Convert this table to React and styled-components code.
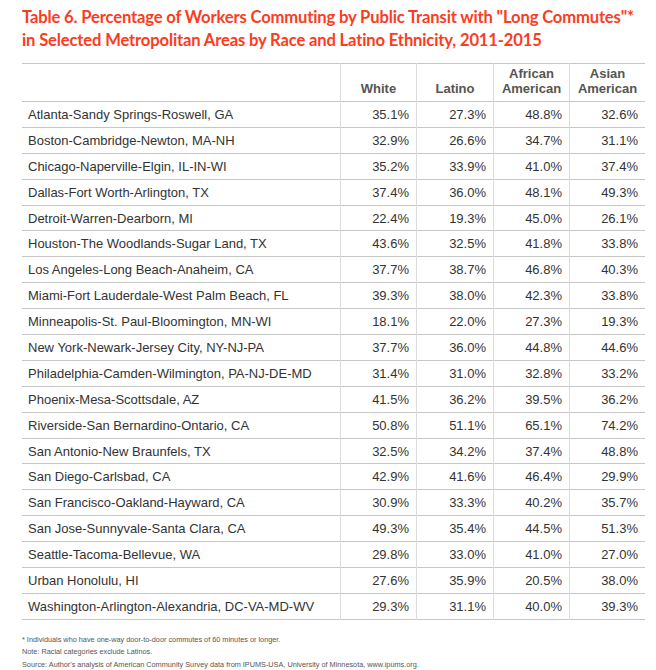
import React from "react";
import styled, { createGlobalStyle } from "styled-components";

const Global = createGlobalStyle`
  html, body { margin: 0; padding: 0; background: #fff; }
  body { font-family: "Liberation Sans", Arial, sans-serif; }
`;

const Page = styled.div`
  padding: 6px 0 0 22px;
  width: 599px;
`;

const Title = styled.h1`
  margin: 0;
  font-family: "Lato", "Open Sans", sans-serif;
  font-weight: 700;
  font-size: 16.6px;
  line-height: 22.5px;
  color: #fb3c22;
  letter-spacing: -0.15px;
  white-space: nowrap;
`;

const Table = styled.table`
  margin-top: 12px;
  width: 599px;
  border-collapse: collapse;
  table-layout: fixed;
  border-top: 1px solid #c6c6c6;
  border-bottom: 1px solid #c6c6c6;
`;

const HeadCell = styled.th`
  height: 32px;
  padding: 0 2px 5px;
  vertical-align: bottom;
  text-align: center;
  font-size: 13px;
  line-height: 15px;
  font-weight: 700;
  color: #555;
  border-left: ${(p) => (p.$first ? "none" : "1px solid #dcdcdc")};
  width: ${(p) => p.$w}px;
`;

const Row = styled.tr`
  border-top: 1px solid #c6c6c6;
`;

const NameCell = styled.td`
  height: 24.9px;
  padding: 0 0 0 6px;
  font-size: 13px;
  color: #333;
  white-space: nowrap;
  vertical-align: middle;
`;

const ValueCell = styled.td`
  padding: 0 7px 0 0;
  font-size: 13px;
  color: #333;
  text-align: right;
  border-left: 1px solid #dcdcdc;
  vertical-align: middle;
`;

const Notes = styled.div`
  margin-top: 15px;
  display: flex;
  flex-direction: column;
  gap: 3px;
`;

const Note = styled.p`
  margin: 0;
  font-size: 7.3px;
  line-height: 9.5px;
  color: #555;
  white-space: nowrap;
`;

const rows = [
  ["Atlanta-Sandy Springs-Roswell, GA", "35.1%", "27.3%", "48.8%", "32.6%"],
  ["Boston-Cambridge-Newton, MA-NH", "32.9%", "26.6%", "34.7%", "31.1%"],
  ["Chicago-Naperville-Elgin, IL-IN-WI", "35.2%", "33.9%", "41.0%", "37.4%"],
  ["Dallas-Fort Worth-Arlington, TX", "37.4%", "36.0%", "48.1%", "49.3%"],
  ["Detroit-Warren-Dearborn, MI", "22.4%", "19.3%", "45.0%", "26.1%"],
  ["Houston-The Woodlands-Sugar Land, TX", "43.6%", "32.5%", "41.8%", "33.8%"],
  ["Los Angeles-Long Beach-Anaheim, CA", "37.7%", "38.7%", "46.8%", "40.3%"],
  ["Miami-Fort Lauderdale-West Palm Beach, FL", "39.3%", "38.0%", "42.3%", "33.8%"],
  ["Minneapolis-St. Paul-Bloomington, MN-WI", "18.1%", "22.0%", "27.3%", "19.3%"],
  ["New York-Newark-Jersey City, NY-NJ-PA", "37.7%", "36.0%", "44.8%", "44.6%"],
  ["Philadelphia-Camden-Wilmington, PA-NJ-DE-MD", "31.4%", "31.0%", "32.8%", "33.2%"],
  ["Phoenix-Mesa-Scottsdale, AZ", "41.5%", "36.2%", "39.5%", "36.2%"],
  ["Riverside-San Bernardino-Ontario, CA", "50.8%", "51.1%", "65.1%", "74.2%"],
  ["San Antonio-New Braunfels, TX", "32.5%", "34.2%", "37.4%", "48.8%"],
  ["San Diego-Carlsbad, CA", "42.9%", "41.6%", "46.4%", "29.9%"],
  ["San Francisco-Oakland-Hayward, CA", "30.9%", "33.3%", "40.2%", "35.7%"],
  ["San Jose-Sunnyvale-Santa Clara, CA", "49.3%", "35.4%", "44.5%", "51.3%"],
  ["Seattle-Tacoma-Bellevue, WA", "29.8%", "33.0%", "41.0%", "27.0%"],
  ["Urban Honolulu, HI", "27.6%", "35.9%", "20.5%", "38.0%"],
  ["Washington-Arlington-Alexandria, DC-VA-MD-WV", "29.3%", "31.1%", "40.0%", "39.3%"],
];

export default function App() {
  return (
    <>
      <Global />
      <Page>
        <Title>
          Table 6. Percentage of Workers Commuting by Public Transit with "Long Commutes"*
          <br />
          in Selected Metropolitan Areas by Race and Latino Ethnicity, 2011-2015
        </Title>
        <Table>
          <thead>
            <tr>
              <HeadCell $first $w={314}></HeadCell>
              <HeadCell $w={71}>White</HeadCell>
              <HeadCell $w={72}>Latino</HeadCell>
              <HeadCell $w={71}>African<br />American</HeadCell>
              <HeadCell $w={71}>Asian<br />American</HeadCell>
            </tr>
          </thead>
          <tbody>
            {rows.map((r) => (
              <Row key={r[0]}>
                <NameCell>{r[0]}</NameCell>
                <ValueCell>{r[1]}</ValueCell>
                <ValueCell>{r[2]}</ValueCell>
                <ValueCell>{r[3]}</ValueCell>
                <ValueCell>{r[4]}</ValueCell>
              </Row>
            ))}
          </tbody>
        </Table>
        <Notes>
          <Note>* Individuals who have one-way door-to-door commutes of 60 minutes or longer.</Note>
          <Note>Note: Racial categories exclude Latinos.</Note>
          <Note>Source: Author's analysis of American Community Survey data from IPUMS-USA, University of Minnesota, www.ipums.org.</Note>
        </Notes>
      </Page>
    </>
  );
}
